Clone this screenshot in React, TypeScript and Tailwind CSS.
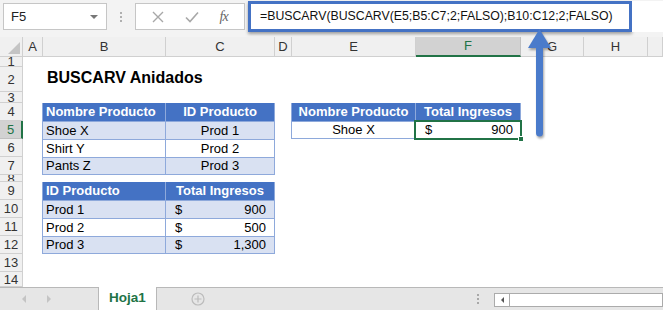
import React from "react";

const font = { fontFamily: '"Liberation Sans", Arial, sans-serif' };

const rowStarts = [
  "row-start-2",
  "row-start-3",
  "row-start-4",
  "row-start-5",
  "row-start-6",
  "row-start-7",
  "row-start-8",
  "row-start-9",
  "row-start-10",
  "row-start-11",
  "row-start-12",
  "row-start-13",
  "row-start-14",
  "row-start-15",
];

const colStarts = [
  "col-start-2",
  "col-start-3",
  "col-start-4",
  "col-start-5",
  "col-start-6",
  "col-start-7",
  "col-start-8",
  "col-start-9",
  "col-start-10",
];

const letters = ["A", "B", "C", "D", "E", "F", "G", "H", ""];

function Money({ v }: { v: string }) {
  return (
    <div className="flex w-full justify-between pl-[9px] pr-[8px]">
      <span>$</span>
      <span>{v}</span>
    </div>
  );
}

export default function App() {
  return (
    <div
      className="relative w-[663px] h-[310px] overflow-hidden bg-white text-[13px] text-black flex flex-col"
      style={font}
    >
      {/* formula bar */}
      <div className="h-[37px] shrink-0 bg-[#f3f3f3] flex items-start">
        <div className="ml-[3px] mt-[3px] w-[104px] h-[27px] bg-white border border-[#c6c6c6] flex items-center justify-between pl-[7px] pr-[8px] text-[#222]">
          <span>F5</span>
          <span className="w-0 h-0 border-l-[4px] border-r-[4px] border-t-[4px] border-l-transparent border-r-transparent border-t-[#777]" />
        </div>
        <div className="w-[28px] h-[33px] flex flex-col items-center justify-center gap-[2px]">
          <span className="w-[2px] h-[2px] bg-[#b0b0b0]" />
          <span className="w-[2px] h-[2px] bg-[#b0b0b0]" />
          <span className="w-[2px] h-[2px] bg-[#b0b0b0]" />
        </div>
        <div className="mt-[3px] w-[110px] h-[27px] bg-white border border-[#c6c6c6] flex items-center justify-around px-[6px]">
          <svg width="12" height="12" viewBox="0 0 12 12">
            <path d="M1 1L11 11M11 1L1 11" stroke="#a8a8a8" strokeWidth="1.4" />
          </svg>
          <svg width="14" height="12" viewBox="0 0 14 12">
            <path d="M1 6.5L5 10.5L13 1.5" stroke="#a8a8a8" strokeWidth="1.6" fill="none" />
          </svg>
          <span
            className="italic text-[14px] text-[#666] tracking-[-1px]"
            style={{ fontFamily: '"Liberation Serif", serif' }}
          >
            fx
          </span>
        </div>
        <div className="ml-[3px] mt-[1px] w-[384px] h-[31px] bg-white border-[3px] border-[#4472c4] shadow-[0_2px_3px_rgba(0,0,0,0.35)] flex items-center pl-[9px] text-[12.3px] text-[#111]">
          =BUSCARV(BUSCARV(E5;B5:C7;2;FALSO);B10:C12;2;FALSO)
        </div>
        <div className="flex-1 h-[31px] mt-[1px] bg-white" />
      </div>

      {/* sheet */}
      <div className="grid grid-cols-[23px_20px_123px_109px_17px_124px_105px_63px_64px_1fr] grid-rows-[20px_10px_25px_11px_18px_18px_18px_18px_7px_18px_18px_18px_18px_18px_15px] h-[250px] shrink-0 overflow-hidden">
        {/* corner */}
        <div className="col-start-1 row-start-1 bg-[#f0f0f0] border-r border-b border-[#d0d0d0] relative">
          <svg className="absolute right-[2px] bottom-[2px]" width="12" height="12" viewBox="0 0 12 12">
            <path d="M12 0L12 12L0 12Z" fill="#c4c4c4" />
          </svg>
        </div>
        {letters.map((l, i) => (
          <div
            key={i}
            className={`${colStarts[i]} row-start-1 flex items-center justify-center border-r ${
              l === "F"
                ? "bg-[#d2d2d2] text-[#217346] border-b-2 border-b-[#217346] border-r-[#c0c0c0]"
                : "bg-[#f0f0f0] text-[#333] border-b border-[#d0d0d0]"
            }`}
          >
            {l}
          </div>
        ))}
        {rowStarts.map((r, i) => (
          <div
            key={r}
            className={`${r} col-start-1 flex items-center justify-center overflow-hidden border-b leading-[15px] ${
              i === 4
                ? "bg-[#d2d2d2] text-[#217346] border-r-2 border-r-[#217346] border-b-[#c0c0c0]"
                : "bg-[#f0f0f0] text-[#333] border-r border-[#d0d0d0]"
            }`}
          >
            {i + 1}
          </div>
        ))}

        {/* title */}
        <div className="col-start-3 col-end-6 row-start-3 flex items-end pl-[4px] pb-[2px] font-bold text-[16px] whitespace-nowrap">
          BUSCARV Anidados
        </div>

        {/* table 1 */}
        <div className="col-start-3 col-end-5 row-start-5 row-end-9 -ml-px w-[233px] flex flex-col">
          <div className="h-[18px] flex bg-[#4472c4] text-white font-bold border-l border-[#8ea9db]">
            <div className="w-[123px] border-r border-[#8ea9db] pl-[3px] flex items-center">Nombre Producto</div>
            <div className="w-[109px] border-r border-[#8ea9db] flex items-center justify-center">ID Producto</div>
          </div>
          {[
            ["Shoe X", "Prod 1", true],
            ["Shirt Y", "Prod 2", false],
            ["Pants Z", "Prod 3", true],
          ].map(([a, b, band]) => (
            <div
              key={a as string}
              className={`h-[18px] flex border-l border-t border-[#8ea9db] ${band ? "bg-[#d9e1f2]" : "bg-white"} ${
                a === "Pants Z" ? "border-b" : ""
              }`}
            >
              <div className="w-[123px] border-r border-[#8ea9db] pl-[3px] flex items-center">{a}</div>
              <div className="w-[109px] border-r border-[#8ea9db] flex items-center justify-center">{b}</div>
            </div>
          ))}
        </div>

        {/* table 2 */}
        <div className="col-start-3 col-end-5 row-start-10 row-end-14 -ml-px w-[233px] flex flex-col">
          <div className="h-[18px] flex bg-[#4472c4] text-white font-bold border-l border-[#8ea9db]">
            <div className="w-[123px] border-r border-[#8ea9db] pl-[3px] flex items-center">ID Producto</div>
            <div className="w-[109px] border-r border-[#8ea9db] flex items-center justify-center">Total Ingresos</div>
          </div>
          {[
            ["Prod 1", "900", true],
            ["Prod 2", "500", false],
            ["Prod 3", "1,300", true],
          ].map(([a, b, band]) => (
            <div
              key={a as string}
              className={`h-[18px] flex border-l border-t border-[#8ea9db] ${band ? "bg-[#d9e1f2]" : "bg-white"} ${
                a === "Prod 3" ? "border-b" : ""
              }`}
            >
              <div className="w-[123px] border-r border-[#8ea9db] pl-[3px] flex items-center">{a}</div>
              <div className="w-[109px] border-r border-[#8ea9db] flex items-center">
                <Money v={b as string} />
              </div>
            </div>
          ))}
        </div>

        {/* table 3 */}
        <div className="col-start-6 col-end-8 row-start-5 row-end-7 -ml-px w-[230px] flex flex-col">
          <div className="h-[18px] flex bg-[#4472c4] text-white font-bold border-l border-[#8ea9db]">
            <div className="w-[124px] border-r border-[#8ea9db] flex items-center justify-center">Nombre Producto</div>
            <div className="w-[105px] border-r border-[#8ea9db] flex items-center justify-center">Total Ingresos</div>
          </div>
          <div className="h-[18px] flex border-l border-t border-b border-[#8ea9db] bg-white">
            <div className="w-[124px] border-r border-[#8ea9db] flex items-center justify-center">Shoe X</div>
            <div className="relative w-[105px] flex items-center">
              <div className="flex w-full justify-between pl-[9px] pr-[8px]">
                <span>$</span>
                <span>900</span>
              </div>
              <div className="absolute -left-[2px] -top-[2px] -right-[1px] -bottom-[2px] border-2 border-[#217346]" />
              <div className="absolute -right-[3px] -bottom-[4px] w-[6px] h-[6px] bg-[#217346] border border-white" />
            </div>
          </div>
        </div>
      </div>

      {/* tab bar */}
      <div className="flex-1 bg-[#e6e6e6] flex items-stretch relative">
        <div className="w-[98px] border-t border-[#b8b8b8] flex items-center pl-[22px] gap-[21px]">
          <span className="w-0 h-0 border-t-[4px] border-b-[4px] border-r-[4px] border-t-transparent border-b-transparent border-r-[#c4c4c4]" />
          <span className="w-0 h-0 border-t-[4px] border-b-[4px] border-l-[4px] border-t-transparent border-b-transparent border-l-[#c4c4c4]" />
        </div>
        <div className="w-[59px] bg-white border-l border-r border-[#b8b8b8] flex items-center justify-center font-bold text-[#217346] text-[13.5px]">
          Hoja1
        </div>
        <div className="flex-1 border-t border-[#b8b8b8] flex items-center">
          <svg className="ml-[34px]" width="14" height="14" viewBox="0 0 14 14">
            <circle cx="7" cy="7" r="6" fill="none" stroke="#bcbcbc" strokeWidth="1.2" />
            <path d="M7 3.5V10.5M3.5 7H10.5" stroke="#bcbcbc" strokeWidth="1.2" />
          </svg>
          <div className="ml-[272px] flex flex-col gap-[2px]">
            <span className="w-[2px] h-[2px] bg-[#a8a8a8]" />
            <span className="w-[2px] h-[2px] bg-[#a8a8a8]" />
            <span className="w-[2px] h-[2px] bg-[#a8a8a8]" />
          </div>
          <div className="ml-[15px] h-[14px] flex-1 bg-white border border-[#ababab] flex mt-[1px]">
            <div className="w-[15px] border-r border-[#ababab] flex items-center justify-center">
              <span className="w-0 h-0 border-t-[3px] border-b-[3px] border-r-[3px] border-t-transparent border-b-transparent border-r-[#555]" />
            </div>
          </div>
        </div>
      </div>

      {/* annotation arrow */}
      <svg
        className="absolute left-[524px] top-[27px] drop-shadow-[1px_2px_1px_rgba(0,0,0,0.35)]"
        width="32"
        height="114"
        viewBox="0 0 32 114"
      >
        <path d="M15.5 2L27 21H4Z" fill="#4a7bcb" />
        <path d="M15.5 20V106" stroke="#4a7bcb" strokeWidth="7" strokeLinecap="round" />
      </svg>
    </div>
  );
}
